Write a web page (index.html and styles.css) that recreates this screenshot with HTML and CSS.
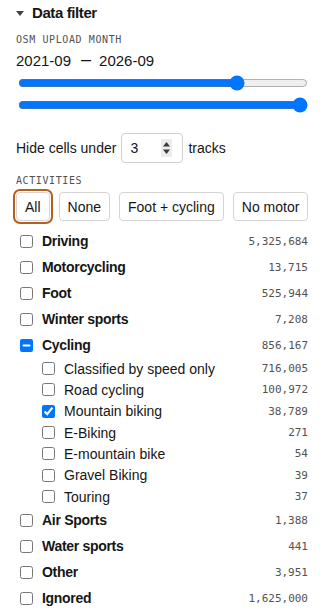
FILE: index.html
```html
<!DOCTYPE html>
<html lang="en">
<head>
    <meta charset="UTF-8">
    <meta name="viewport" content="width=device-width, initial-scale=1.0">
    <title>Data filter</title>
    <link rel="stylesheet" href="styles.css">
</head>
<body>

<details class="panel" open>
    <summary class="panel-title">
        <svg class="caret" width="8" height="5" viewBox="0 0 8 5"><path d="M0 0h8L4 5z"/></svg>
        Data filter
    </summary>

    <p class="field-label">OSM upload month</p>
    <p class="range-value">2021-09<span class="dash">—</span>2026-09</p>
    <input class="range" type="range" min="0" max="100" value="77">
    <input class="range range-second" type="range" min="0" max="100" value="100">

    <div class="min-row">
        <label for="minTracks">Hide cells under</label>
        <div class="stepper">
            <input class="number" type="text" id="minTracks" value="3">
            <span class="spin">
                <svg width="7" height="12" viewBox="0 0 7 12"><path d="M0 4.5L3.5 0L7 4.5z M0 7.5L3.5 12L7 7.5z"/></svg>
            </span>
        </div>
        <span>tracks</span>
    </div>

    <p class="field-label activities-label">Activities</p>
    <div class="presets">
        <button class="preset is-focused">All</button>
        <button class="preset">None</button>
        <button class="preset">Foot + cycling</button>
        <button class="preset">No motor</button>
    </div>

    <ul class="activity-list">
        <li class="row"><input type="checkbox"><span class="name">Driving</span><span class="count">5,325,684</span></li>
        <li class="row"><input type="checkbox"><span class="name">Motorcycling</span><span class="count">13,715</span></li>
        <li class="row"><input type="checkbox"><span class="name">Foot</span><span class="count">525,944</span></li>
        <li class="row"><input type="checkbox"><span class="name">Winter sports</span><span class="count">7,208</span></li>
        <li class="row"><input type="checkbox" id="cycling"><span class="name">Cycling</span><span class="count">856,167</span></li>
        <li>
            <ul class="sub-list">
                <li class="row sub"><input type="checkbox"><span class="name">Classified by speed only</span><span class="count">716,005</span></li>
                <li class="row sub"><input type="checkbox"><span class="name">Road cycling</span><span class="count">100,972</span></li>
                <li class="row sub"><input type="checkbox" checked><span class="name">Mountain biking</span><span class="count">38,789</span></li>
                <li class="row sub"><input type="checkbox"><span class="name">E-Biking</span><span class="count">271</span></li>
                <li class="row sub"><input type="checkbox"><span class="name">E-mountain bike</span><span class="count">54</span></li>
                <li class="row sub"><input type="checkbox"><span class="name">Gravel Biking</span><span class="count">39</span></li>
                <li class="row sub"><input type="checkbox"><span class="name">Touring</span><span class="count">37</span></li>
            </ul>
        </li>
        <li class="row"><input type="checkbox"><span class="name">Air Sports</span><span class="count">1,388</span></li>
        <li class="row"><input type="checkbox"><span class="name">Water sports</span><span class="count">441</span></li>
        <li class="row"><input type="checkbox"><span class="name">Other</span><span class="count">3,951</span></li>
        <li class="row"><input type="checkbox"><span class="name">Ignored</span><span class="count">1,625,000</span></li>
    </ul>
</details>

<script src="script.js"></script>
</body>
</html>
```

FILE: styles.css
```css
* {
    margin: 0;
    padding: 0;
    box-sizing: border-box;
}
body {
    font-family: "Liberation Sans", Arial, sans-serif;
    font-size: 14px;
    color: #161616;
    background-color: #fff;
}
.panel {
    padding: 2px 16px 0;
}
.panel-title {
    display: flex;
    align-items: center;
    gap: 8px;
    list-style: none;
    font-size: 15px;
    font-weight: bold;
    letter-spacing: -0.4px;
    line-height: 22px;
    cursor: pointer;
}
.panel-title::-webkit-details-marker {
    display: none;
}
.caret {
    fill: #444;
}
.field-label {
    margin-top: 9px;
    font-family: "DejaVu Sans Mono", monospace;
    font-size: 10px;
    line-height: 14px;
    letter-spacing: 0.6px;
    text-transform: uppercase;
    color: #525252;
}
.range-value {
    margin-top: 4px;
    font-size: 15px;
    line-height: 20px;
}
.dash {
    display: inline-block;
    margin: 0 8px 0 10px;
    font-size: 10px;
    font-weight: bold;
    vertical-align: 2px;
}
.range {
    display: block;
    width: calc(100% - 2px);
    height: 16px;
    margin: 4px 0 0 2px;
}
.range-second {
    margin-top: 6px;
}

/* Minimum track count */
.min-row {
    display: flex;
    align-items: center;
    gap: 5px;
    margin-top: 20px;
}
.stepper {
    display: flex;
    align-items: center;
    width: 62px;
    height: 30px;
    padding: 0 10px 0 8px;
    border: 1px solid #d0d0d0;
    border-radius: 4px;
}
.number {
    width: 30px;
    border: none;
    outline: none;
    font-family: inherit;
    font-size: 14px;
    color: #161616;
}
.spin {
    display: flex;
    align-items: center;
    justify-content: center;
    width: 11px;
    height: 18px;
    margin-left: auto;
    background-color: #ececec;
    fill: #3a3a3a;
}
.activities-label {
    margin-top: 11px;
}

/* Preset buttons */
.presets {
    display: flex;
    gap: 9px;
    margin-top: 4px;
}
.preset {
    flex-shrink: 0;
    height: 29px;
    padding: 0 8px;
    border: 1px solid #d4d4d4;
    border-radius: 4px;
    background-color: #fff;
    font-family: inherit;
    font-size: 14px;
    color: #161616;
    white-space: nowrap;
    cursor: pointer;
}
.preset.is-focused {
    outline: 2px solid #b0621c;
    outline-offset: 1px;
}

/* Activity checkboxes */
.activity-list {
    list-style: none;
    margin-top: 7px;
}
.sub-list {
    list-style: none;
}
.row {
    display: flex;
    align-items: center;
    height: 26px;
}
.row input {
    width: 13px;
    height: 13px;
    margin: 0 9px 0 4px;
    flex-shrink: 0;
}
.row .name {
    font-weight: bold;
    letter-spacing: -0.3px;
}
.row.sub {
    height: 21.33px;
    padding-left: 22px;
}
.row.sub .name {
    font-weight: normal;
    letter-spacing: 0;
}
.count {
    margin-left: auto;
    font-family: "DejaVu Sans Mono", monospace;
    font-size: 11px;
    color: #525252;
}
```

FILE: script.js
```js
// Cycling is only partly selected
document.getElementById('cycling').indeterminate = true;
```
